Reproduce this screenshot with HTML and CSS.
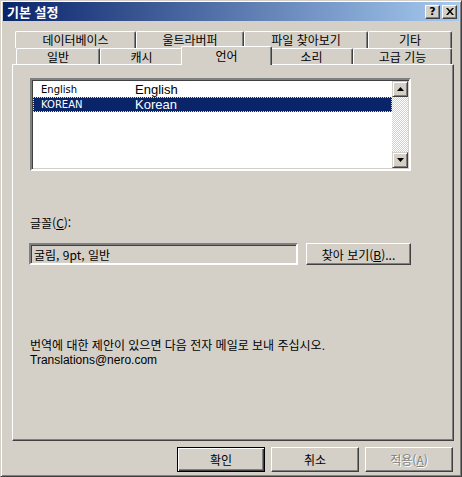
FILE: index.html
```html
<!DOCTYPE html>
<html lang="ko">
<head>
<meta charset="utf-8">
<title>기본 설정</title>
<link rel="stylesheet" href="styles.css">
</head>
<body>
<div class="window">
  <div class="titlebar">
    <span class="title">기본 설정</span>
    <div class="tb-buttons">
      <span class="tb-btn help">?</span>
      <span class="tb-btn close">
        <svg width="8" height="7" viewBox="0 0 8 7"><path d="M0 0h2l2 2.5L6 0h2L5 3.5 8 7H6L4 4.5 2 7H0l3-3.5z" fill="#000"/></svg>
      </span>
    </div>
  </div>
  <div class="content">
    <div class="tabstrip">
      <div class="tabrow row1">
        <div class="tab w121">데이터베이스</div>
        <div class="tab w108">울트라버퍼</div>
        <div class="tab w124">파일 찾아보기</div>
        <div class="tab w84">기타</div>
      </div>
      <div class="tabrow row2">
        <div class="tab w84">일반</div>
        <div class="tab w83">캐시</div>
        <div class="tab active">언어</div>
        <div class="tab w83">소리</div>
        <div class="tab w99">고급 기능</div>
      </div>
    </div>
    <div class="panel">
      <div class="listbox">
        <div class="list-items">
          <div class="row"><span class="c1">English</span><span class="c2">English</span></div>
          <div class="row selected"><span class="c1">KOREAN</span><span class="c2">Korean</span></div>
        </div>
        <div class="scrollbar">
          <div class="sb-btn"><svg width="7" height="4" viewBox="0 0 7 4"><path d="M3.5 0L7 4H0z" fill="#000"/></svg></div>
          <div class="sb-track"></div>
          <div class="sb-btn"><svg width="7" height="4" viewBox="0 0 7 4"><path d="M0 0h7L3.5 4z" fill="#000"/></svg></div>
        </div>
      </div>
      <div class="font-label">글꼴(<u>C</u>):</div>
      <div class="font-row">
        <div class="field">굴림, 9pt, 일반</div>
        <div class="btn browse">찾아 보기(<u>B</u>)...</div>
      </div>
      <div class="note">
        <div class="note-line">번역에 대한 제안이 있으면 다음 전자 메일로 보내 주십시오.</div>
        <div class="note-line">Translations@nero.com</div>
      </div>
    </div>
    <div class="buttons">
      <div class="btn default">확인</div>
      <div class="btn">취소</div>
      <div class="btn disabled">적용(<u>A</u>)</div>
    </div>
  </div>
</div>
</body>
</html>
```
FILE: styles.css
```css
* { box-sizing: border-box; }
html, body { margin: 0; padding: 0; }
body {
  background: #d4d0c8;
  font-family: "Liberation Sans", "Noto Sans CJK KR", sans-serif;
  font-size: 12px;
  color: #000;
}
.window {
  width: 462px;
  height: 477px;
  background: #d4d0c8;
  border: 1px solid;
  border-color: #d4d0c8 #404040 #404040 #d4d0c8;
  box-shadow: inset 1px 1px #fff, inset -1px -1px #808080;
  padding: 1px 2px 2px 2px;
  display: flex;
  flex-direction: column;
}
.titlebar {
  height: 19px;
  background: linear-gradient(to right, #0a246a, #a6caf0);
  display: flex;
  align-items: center;
  justify-content: space-between;
  padding: 0 2px 0 4px;
}
.title {
  color: #fff;
  font-weight: bold;
  font-family: "Noto Sans CJK KR", sans-serif;
  font-size: 13px;
  line-height: 15px;
}
.tb-buttons { display: flex; gap: 2px; }
.tb-btn {
  width: 15px;
  height: 14px;
  background: #d4d0c8;
  border: 1px solid;
  border-color: #fff #404040 #404040 #fff;
  box-shadow: inset -1px -1px #808080;
  display: flex;
  align-items: center;
  justify-content: center;
  font-weight: bold;
  font-size: 11px;
  font-family: "DejaVu Sans", sans-serif;
  line-height: 1;
}
.content {
  flex: 1;
  display: flex;
  flex-direction: column;
  padding: 10px 5px 0 9px;
}
.tabstrip { height: 33px; display: flex; flex-direction: column; }
.tabrow { display: flex; }
.row1 { height: 17px; margin-left: 3px; }
.row2 { height: 16px; margin-left: 4px; }
.tab {
  font-family: "Noto Sans CJK KR", sans-serif;
  font-size: 12px;
  line-height: 14px;
  text-align: center;
  border-top: 1px solid #fff;
  border-left: 1px solid #fff;
  border-right: 1px solid #404040;
  box-shadow: inset -1px 0 #808080;
  border-radius: 2px 2px 0 0;
  background: #d4d0c8;
  padding-top: 1px;
}
.w121 { width: 121px; }
.w108 { width: 108px; }
.w124 { width: 124px; }
.w84 { width: 84px; }
.w83 { width: 83px; }
.w99 { width: 99px; }
.tab.active {
  width: 91px;
  margin: -2px -2px -1px -2px;
  height: 19px;
  position: relative;
  z-index: 1;
  padding-top: 2px;
}
.panel {
  width: 442px;
  height: 377px;
  border: 1px solid;
  border-color: #fff #404040 #404040 #fff;
  box-shadow: inset -1px -1px #808080;
  padding: 13px 0 0 17px;
  display: flex;
  flex-direction: column;
}
.listbox {
  width: 381px;
  height: 93px;
  border: 2px solid;
  border-color: #808080 #fff #fff #808080;
  box-shadow: inset 1px 1px #404040, inset -1px -1px #d4d0c8;
  background: #fff;
  display: flex;
  padding: 1px;
}
.list-items { flex: 1; padding-top: 1px; }
.row {
  height: 15px;
  display: flex;
  align-items: center;
}
.c1 {
  width: 102px;
  padding-left: 8px;
  font-family: "DejaVu Sans", sans-serif;
  font-size: 10px;
}
.c2 {
  font-family: "Liberation Sans", sans-serif;
  font-size: 13px;
}
.row.selected {
  background: #0a246a;
  color: #fff;
  outline: 1px dotted #e8e4a0;
  outline-offset: -1px;
}
.scrollbar {
  width: 16px;
  display: flex;
  flex-direction: column;
}
.sb-btn {
  height: 16px;
  background: #d4d0c8;
  border: 1px solid;
  border-color: #d4d0c8 #404040 #404040 #d4d0c8;
  box-shadow: inset 1px 1px #fff, inset -1px -1px #808080;
  display: flex;
  align-items: center;
  justify-content: center;
}
.sb-track {
  flex: 1;
  background: repeating-conic-gradient(#fff 0 25%, #d4d0c8 0 50%) 0 0 / 2px 2px;
}
.font-label {
  margin-top: 44px;
  font-family: "Noto Sans CJK KR", sans-serif;
  line-height: 15px;
}
.font-row {
  display: flex;
  gap: 8px;
  margin-top: 13px;
  margin-left: -1px;
}
.field {
  width: 269px;
  height: 22px;
  border: 2px solid;
  border-color: #808080 #fff #fff #808080;
  box-shadow: inset 1px 1px #404040, inset -1px -1px #d4d0c8;
  padding: 2px 0 0 3px;
  font-family: "Noto Sans CJK KR", sans-serif;
  line-height: 16px;
}
.btn {
  height: 22px;
  background: #d4d0c8;
  border: 1px solid;
  border-color: #fff #404040 #404040 #fff;
  box-shadow: inset -1px -1px #808080;
  display: flex;
  align-items: center;
  justify-content: center;
  font-family: "Noto Sans CJK KR", sans-serif;
  font-size: 12px;
}
.browse { width: 105px; }
.note {
  margin-top: 74px;
  font-family: "Liberation Sans", "Noto Sans CJK KR", sans-serif;
  display: flex;
  flex-direction: column;
}
.note-line {
  height: 14px;
  line-height: 14px;
}
.buttons {
  display: flex;
  justify-content: flex-end;
  gap: 6px;
  padding-right: 1px;
  margin-top: 6px;
}
.buttons .btn { width: 88px; height: 25px; }
.btn.default {
  border: 1px solid #000;
  box-shadow: inset 1px 1px #fff, inset -1px -1px #404040, inset -2px -2px #808080;
}
.btn.disabled {
  color: #808080;
  text-shadow: 1px 1px #fff;
}
```
